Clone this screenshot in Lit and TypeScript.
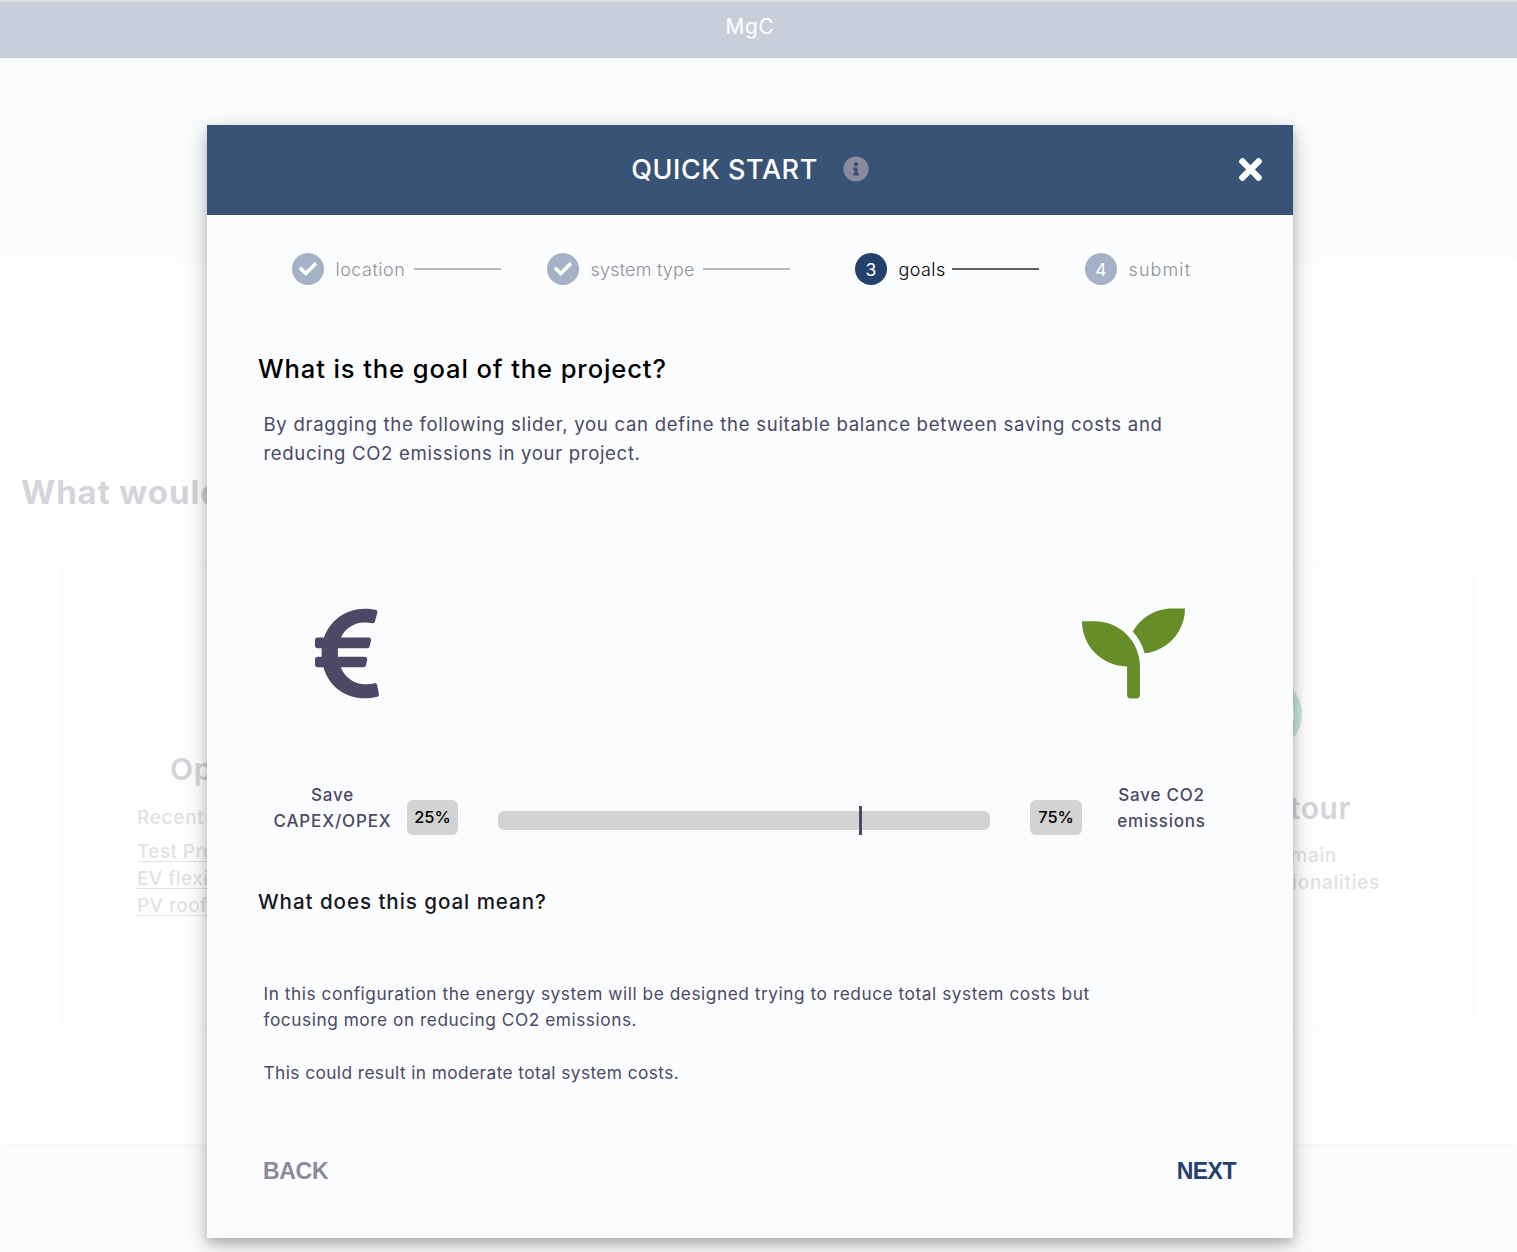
import { LitElement, html, css, svg } from "lit";
import { customElement } from "lit/decorators.js";
import { classMap } from "lit/directives/class-map.js";

const ICONS = {
  euro: {
    box: "0 0 320 512",
    d: "M310.706 413.765c-1.314-6.63-7.835-10.872-14.424-9.369-10.692 2.439-27.422 5.413-45.426 5.413-56.763 0-101.929-34.79-121.461-85.449h113.689a12 12 0 0 0 11.708-9.369l6.373-28.36c1.686-7.502-4.019-14.631-11.708-14.631H115.22c-1.21-14.328-1.414-28.287.137-42.245H261.95a12 12 0 0 0 11.723-9.434l6.512-29.755c1.638-7.484-4.061-14.566-11.723-14.566H130.184c20.633-44.991 62.69-75.03 117.619-75.03 14.486 0 28.564 2.25 37.851 4.145 6.216 1.268 12.347-2.498 14.002-8.623l11.991-44.368c1.822-6.741-2.465-13.616-9.326-14.917C290.217 34.912 270.71 32 249.635 32 152.451 32 74.03 92.252 45.075 176H12c-6.627 0-12 5.373-12 12v29.755c0 6.627 5.373 12 12 12h21.569c-1.009 13.607-1.181 29.287-.181 42.245H12c-6.627 0-12 5.373-12 12v28.36c0 6.627 5.373 12 12 12h30.114C67.139 414.692 145.264 480 249.635 480c26.301 0 48.562-4.544 61.101-7.788 6.167-1.595 10.027-7.708 8.788-13.957l-8.818-44.49z",
  },
  seedling: {
    box: "0 0 512 512",
    d: "M64 96H0c0 123.7 100.3 224 224 224v144c0 8.8 7.2 16 16 16h32c8.800 0 16-7.200 16-16V320C288 196.300 187.700 96 64 96zm384-64c-84.200 0-157.400 46.500-195.700 115.200 27.700 30.200 48.200 66.900 59 107.600C424 243.100 512 147.900 512 32h-64z",
  },
  info: {
    box: "0 0 512 512",
    d: "M256 8C119.043 8 8 119.083 8 256c0 136.997 111.043 248 248 248s248-111.003 248-248C504 119.083 392.957 8 256 8zm0 110c23.196 0 42 18.804 42 42s-18.804 42-42 42-42-18.804-42-42 18.804-42 42-42zm56 254c0 6.627-5.373 12-12 12h-88c-6.627 0-12-5.373-12-12v-24c0-6.627 5.373-12 12-12h12v-64h-12c-6.627 0-12-5.373-12-12v-24c0-6.627 5.373-12 12-12h64c6.627 0 12 5.373 12 12v100h12c6.627 0 12 5.373 12 12v24z",
  },
  times: {
    box: "0 80 352 352",
    d: "M242.72 256l100.07-100.07c12.28-12.28 12.28-32.19 0-44.48l-22.24-22.24c-12.28-12.28-32.19-12.28-44.48 0L176 189.28 75.93 89.21c-12.28-12.28-32.19-12.28-44.48 0L9.21 111.45c-12.28 12.28-12.28 32.19 0 44.48L109.28 256 9.21 356.07c-12.28 12.28-12.28 32.19 0 44.48l22.24 22.24c12.28 12.28 32.2 12.28 44.48 0L176 322.72l100.07 100.07c12.28 12.28 32.2 12.28 44.48 0l22.24-22.24c12.28-12.28 12.28-32.19 0-44.48L242.72 256z",
  },
  check: {
    box: "0 0 512 512",
    d: "M173.898 439.404l-166.4-166.4c-9.997-9.997-9.997-26.206 0-36.204l36.203-36.204c9.997-9.998 26.207-9.998 36.204 0L192 312.69 432.095 72.596c9.997-9.997 26.207-9.997 36.204 0l36.203 36.204c9.997 9.997 9.997 26.206 0 36.204l-294.4 294.401c-9.998 9.997-26.207 9.997-36.204-.001z",
  },
};

const icon = (name: keyof typeof ICONS) =>
  html`<svg class="icon icon-${name}" viewBox=${ICONS[name].box} aria-hidden="true">
    ${svg`<path fill="currentColor" d=${ICONS[name].d}></path>`}
  </svg>`;

const STEPS = [
  { id: "location", label: "location", done: true, current: false },
  { id: "system", label: "system type", done: true, current: false },
  { id: "goals", label: "goals", done: false, current: true },
  { id: "submit", label: "submit", done: false, current: false },
];

@customElement("quick-start-dialog")
class QuickStartDialog extends LitElement {
  static styles = css`
    :host {
      display: flex;
      flex-direction: column;
      box-sizing: border-box;
      background: #fbfcfe;
      color: #4b4965;
      font-family: Inter, "Open Sans", sans-serif;
      white-space: nowrap;
    }
    .icon { display: block; }
    .head {
      display: grid;
      grid-template-columns: 1fr auto 1fr;
      align-items: center;
      height: 90px;
      padding: 0 31px 2px;
      box-sizing: border-box;
      background: #395377;
      color: #fff;
    }
    .title-group { grid-column: 2; display: flex; align-items: center; gap: 25px; }
    .title { padding-top: 2px; font-size: 27px; font-weight: 500; line-height: 34px; letter-spacing: 0.55px; }
    .icon-info { width: 26px; height: 26px; color: #8d8a9f; }
    .close { justify-self: end; }
    .icon-times { width: 23px; height: 23px; }

    .steps { display: flex; margin: 38px 0 0 85px; height: 32px; }
    .step { display: flex; align-items: center; font-size: 18px; font-weight: 300; color: #8f9194; }
    .step-location { width: 209px; margin-right: 46px; letter-spacing: 0.5px; }
    .step-system { width: 243px; margin-right: 65px; letter-spacing: 0.2px; }
    .step-goals { width: 184px; margin-right: 46px; letter-spacing: 0.4px; }
    .step-submit { letter-spacing: 1.1px; }
    .current { color: #000; }
    .bullet {
      display: flex;
      align-items: center;
      justify-content: center;
      width: 32px;
      height: 32px;
      margin-right: 11.5px;
      border-radius: 50%;
      background: #a5b1c6;
      color: #fff;
      font-weight: 400;
      font-size: 17.5px;
      letter-spacing: 0;
    }
    .current .bullet { background: #24406d; }
    .icon-check { width: 18px; height: 18px; }
    .step-label { padding-top: 1px; }
    .rule { width: 87px; height: 2px; margin-left: auto; background: #b8baba; }
    .current .rule { background: #5c5d5f; }

    .question { margin: 67px 0 0 51px; font-size: 25.6px; font-weight: 500; line-height: 34px; color: #000; letter-spacing: 0.88px; }
    .intro { margin: 24px 0 0 56.5px; font-size: 18.6px; line-height: 29px; letter-spacing: 0.7px; }
    .intro-rest { letter-spacing: 0.65px; }
    .pictures { display: flex; justify-content: space-between; margin: 134px 108.5px 0 108px; }
    .icon-euro { width: 64px; height: 103px; }
    .icon-seedling { width: 103px; height: 103px; color: #678d28; }

    .balance { display: flex; align-items: flex-start; margin-top: 77px; height: 53px; }
    .caption { font-size: 17px; font-weight: 500; line-height: 26px; text-align: center; }
    .caption-cost { width: 121px; margin-left: 65px; letter-spacing: 0.85px; }
    .caption-co2 { width: 100px; margin-left: 29.5px; letter-spacing: 0.75px; }
    .value {
      width: 51px;
      height: 35px;
      border-radius: 6px;
      background: #d3d3d3;
      color: #000;
      font-size: 16.4px;
      font-weight: 500;
      line-height: 34px;
      text-align: center;
      margin-top: 18px;
    }
    .value-cost { margin-left: 14px; }
    .value-co2 { margin-left: 40px; width: 52px; }
    .track {
      position: relative;
      width: 492px;
      height: 19px;
      margin: 29px 0 0 40px;
      border-radius: 6px;
      background: #d3d3d3;
    }
    .thumb { position: absolute; top: -5px; width: 3px; height: 29px; background: #4b4965; }

    .meaning { margin: 52px 0 0 51px; font-size: 20.6px; font-weight: 500; line-height: 30px; color: #17181c; letter-spacing: 0.93px; }
    .result { margin: 64px 0 0 56.5px; font-size: 17.3px; line-height: 26.3px; letter-spacing: 0.54px; }
    .result-costs { letter-spacing: 0.42px; }
    .actions {
      display: flex;
      justify-content: space-between;
      margin: 70.6px 57px 0 56px;
      font-family: "Liberation Sans", Arial, sans-serif;
      font-size: 23px;
      font-weight: 700;
      line-height: 28px;
      letter-spacing: -0.3px;
    }
    .back { color: #8c899f; }
    .next { color: #24406d; letter-spacing: -0.5px; }
  `;

  private cost = 25;
  private co2 = 75;

  render() {
    return html`
      <div class="head">
        <div class="title-group"><span class="title">QUICK START</span>${icon("info")}</div>
        <div class="close">${icon("times")}</div>
      </div>
      <div class="steps">
        ${STEPS.map(
          (s, i) => html`<div class=${classMap({ step: true, ["step-" + s.id]: true, current: s.current })}>
            <span class="bullet">${s.done ? icon("check") : i + 1}</span>
            <span class="step-label">${s.label}</span>
            ${i < STEPS.length - 1 ? html`<span class="rule"></span>` : null}
          </div>`
        )}
      </div>
      <div class="question">What is the goal of the project?</div>
      <div class="intro">By dragging the following slider, you can define the suitable balance between saving costs and<br /><span class="intro-rest">reducing CO2 emissions in your project.</span></div>
      <div class="pictures">${icon("euro")}${icon("seedling")}</div>
      <div class="balance">
        <div class="caption caption-cost">Save<br />CAPEX/OPEX</div>
        <div class="value value-cost">${this.cost}%</div>
        <div class="track"><div class="thumb" style="left:${(this.co2 / 100) * 481}px"></div></div>
        <div class="value value-co2">${this.co2}%</div>
        <div class="caption caption-co2">Save CO2<br />emissions</div>
      </div>
      <div class="meaning">What does this goal mean?</div>
      <div class="result">In this configuration the energy system will be designed trying to reduce total system costs but<br />focusing more on reducing CO2 emissions.<br /><br /><span class="result-costs">This could result in moderate total system costs.</span></div>
      <div class="actions"><span class="back">BACK</span><span class="next">NEXT</span></div>
    `;
  }
}

@customElement("app-root")
class AppRoot extends LitElement {
  static styles = css`
    :host {
      display: block;
      position: relative;
      height: 1252px;
      overflow: hidden;
      background: #fbfcfe;
      font-family: Inter, "Open Sans", sans-serif;
      white-space: nowrap;
    }
    .topbar {
      box-sizing: border-box;
      height: 58px;
      border-top: 2px solid #dcdfdf;
      padding: 8.5px 17px 0 0;
      background: #c8cfdb;
      color: #fff;
      font-size: 20.8px;
      line-height: 32px;
      letter-spacing: 0.7px;
      text-align: center;
    }
    .welcome {
      box-sizing: border-box;
      height: 882px;
      margin-top: 204px;
      padding: 207px 44px 0 21px;
      background: #fff;
      box-shadow: 0 2px 6px rgba(0, 0, 0, 0.02);
      color: #d5d4da;
    }
    .welcome-title { font-size: 33px; font-weight: 700; line-height: 46px; letter-spacing: 0.9px; }
    .cards { display: flex; justify-content: space-between; margin: 48px 0 0 43px; }
    .card {
      box-sizing: border-box;
      width: 430px;
      height: 466px;
      border-radius: 5px;
      box-shadow: 0 0 5px rgba(0, 0, 0, 0.04);
    }
    .open { padding: 183px 0 0 73px; }
    .tour { display: flex; flex-direction: column; align-items: flex-end; padding-top: 114px; }
    .card-title { font-size: 30px; font-weight: 600; line-height: 46px; letter-spacing: 0.6px; }
    .open .card-title { margin-left: 33px; }
    .tour .card-title { margin: 34px 122px 0 0; }
    .card-text { font-size: 19px; font-weight: 500; line-height: 27px; color: #e2e1e6; letter-spacing: 0.7px; }
    .open .card-text { margin: 12px 0 7px; }
    .tour .card-text { margin: 11px 0 0; }
    .line { display: block; text-align: right; }
    .line-main { padding-right: 136px; }
    .line-func { padding-right: 93px; }
    .link { display: block; font-size: 19px; font-weight: 500; line-height: 27px; color: #e2e1e6; text-decoration: underline; text-decoration-thickness: 1px; text-underline-offset: 3px; letter-spacing: 0.4px; }
    .ring { box-sizing: border-box; width: 74px; height: 74px; margin-right: 171px; border: 8px solid #cbe8dc; border-radius: 50%; }
    .dialog {
      position: absolute;
      left: 207px;
      top: 125px;
      width: 1086px;
      height: 1113px;
      box-shadow: 0 5px 10px rgba(0, 0, 0, 0.2), 0 8px 26px rgba(0, 0, 0, 0.19);
    }
  `;

  render() {
    return html`
      <div class="topbar">MgC</div>
      <div class="welcome">
        <div class="welcome-title">What would you</div>
        <div class="cards">
          <div class="card open">
            <div class="card-title">Open</div>
            <div class="card-text">Recent</div>
            <a class="link">Test Project</a>
            <a class="link">EV flexibility</a>
            <a class="link">PV rooftop</a>
          </div>
          <div class="card tour">
            <div class="ring"></div>
            <div class="card-title">a tour</div>
            <div class="card-text">
              <span class="line line-main">main</span>
              <span class="line line-func">functionalities</span>
            </div>
          </div>
        </div>
      </div>
      <quick-start-dialog class="dialog"></quick-start-dialog>
    `;
  }
}
